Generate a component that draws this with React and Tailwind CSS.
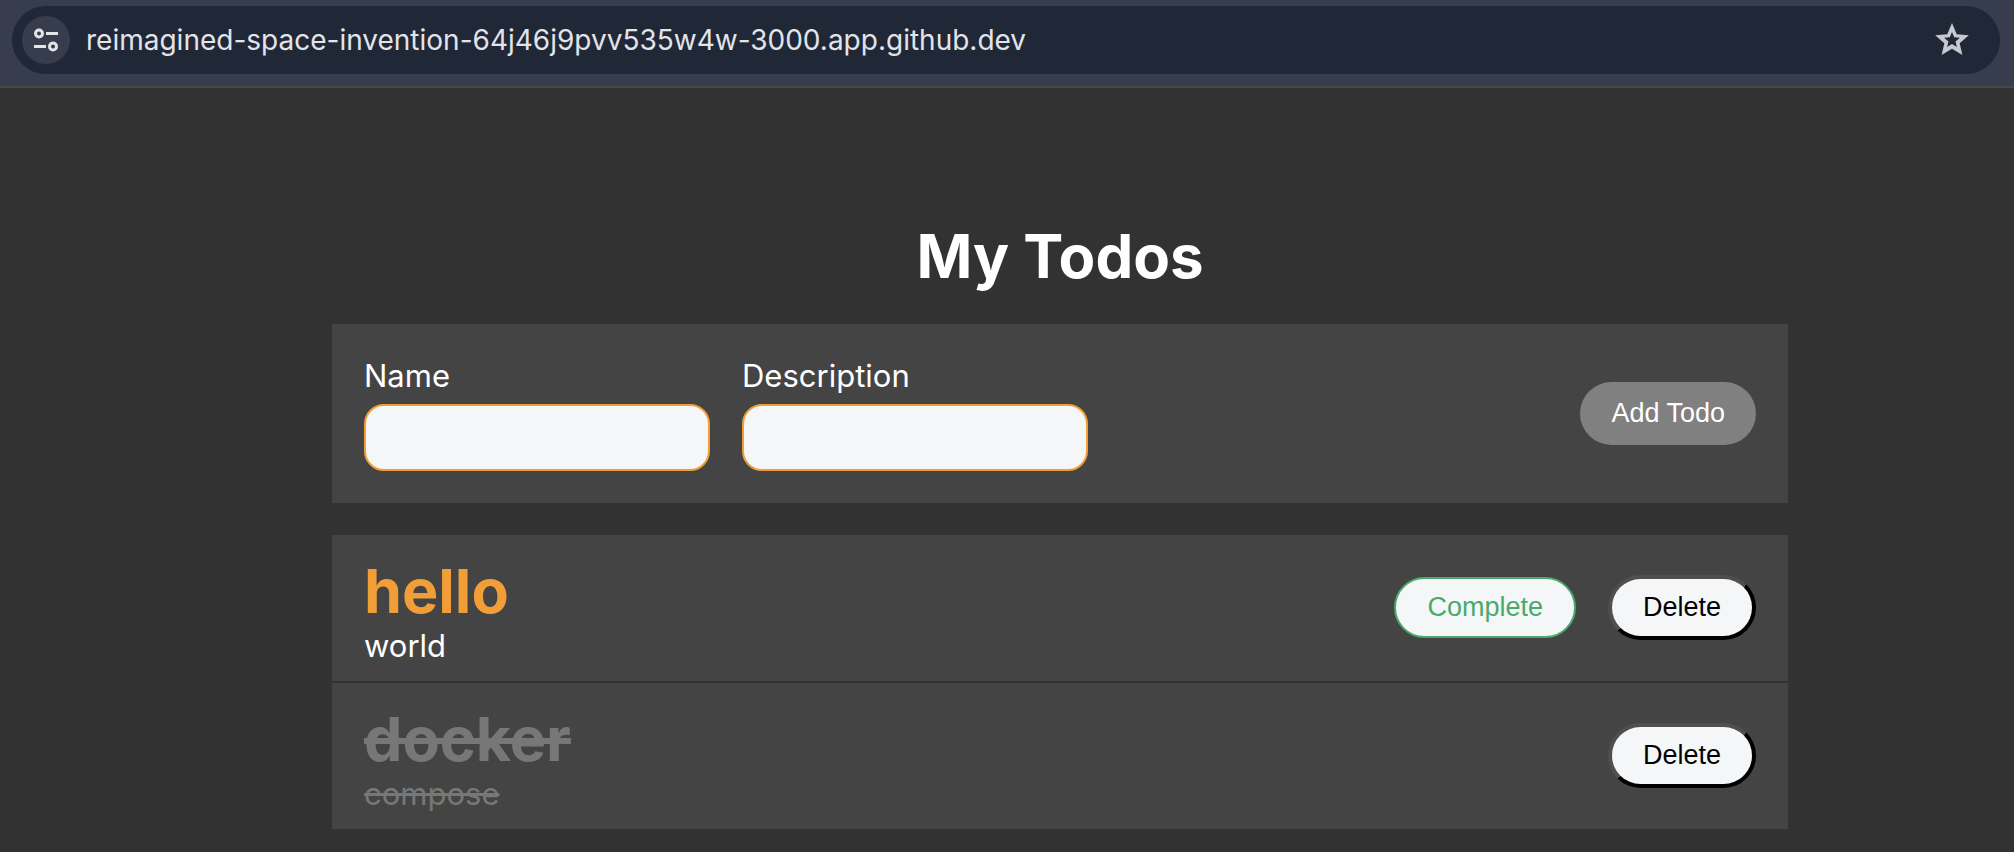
import { useState } from "react";

const initialTodos = [
  { id: 1, name: "hello", description: "world", done: false },
  { id: 2, name: "docker", description: "compose", done: true },
];

function SiteControlsIcon() {
  return (
    <svg viewBox="0 0 24 24" className="size-6" aria-hidden="true">
      <g fill="none" stroke="#e3e3ea" strokeWidth="3">
        <circle cx="5" cy="5.5" r="3.5" />
        <circle cx="19" cy="18.5" r="3.5" />
        <path d="M12 5.5H24M0 18.5H12" />
      </g>
    </svg>
  );
}

function StarIcon() {
  return (
    <svg viewBox="2 2 20 19" className="h-8 w-[34px]" aria-hidden="true">
      <path
        fill="#c7c9d1"
        fillRule="evenodd"
        d="M22 9.24L14.81 8.62 12 2 9.19 8.63 2 9.24 7.46 13.97 5.82 21 12 17.27 18.18 21 16.55 13.97ZM12 7.3L13.3 10.4 16.7 10.75 14.1 13 14.9 16.3 12 14.5 9.1 16.3 9.9 13 7.3 10.75 10.7 10.4Z"
      />
    </svg>
  );
}

function AddressBar() {
  return (
    <header className="border-b-2 border-[#48484b] bg-[#373d4d] pt-[6px] pr-[14px] pb-3 pl-3">
      <div className="flex h-[68px] items-center rounded-full bg-[#202736] pr-[31px] pl-[10px]">
        <button
          type="button"
          aria-label="View site information"
          className="flex size-12 shrink-0 items-center justify-center rounded-full bg-[#373d4d]"
        >
          <SiteControlsIcon />
        </button>
        <input
          type="text"
          aria-label="Address"
          defaultValue="reimagined-space-invention-64j46j9pvv535w4w-3000.app.github.dev"
          className="ml-4 min-w-0 flex-1 bg-transparent text-[28px] text-[#e3e3ea] outline-none"
        />
        <button type="button" aria-label="Bookmark this page" className="shrink-0 pb-[2px]">
          <StarIcon />
        </button>
      </div>
    </header>
  );
}

function Field({ id, label, value, onChange }) {
  return (
    <div className="flex w-[346px] flex-col">
      <label htmlFor={id} className="text-[31px] leading-10">
        {label}
      </label>
      <input
        id={id}
        type="text"
        value={value}
        onChange={(e) => onChange(e.target.value)}
        className="mt-2 h-[67px] rounded-[20px] border-2 border-[#f29e38] bg-[#f5f6f8] px-4 text-[27px] text-black outline-none"
      />
    </div>
  );
}

const pill =
  "rounded-full px-[31px] font-['Liberation_Sans',Arial,sans-serif] text-[27px] leading-[31px]";

function TodoForm({ onAdd }) {
  const [name, setName] = useState("");
  const [description, setDescription] = useState("");

  function submit(e) {
    e.preventDefault();
    if (!name) return;
    onAdd(name, description);
    setName("");
    setDescription("");
  }

  return (
    <form
      onSubmit={submit}
      className="mt-[30px] flex items-center justify-between bg-[#444444] p-8"
    >
      <div className="flex gap-8">
        <Field id="name" label="Name" value={name} onChange={setName} />
        <Field
          id="description"
          label="Description"
          value={description}
          onChange={setDescription}
        />
      </div>
      <button type="submit" className={`${pill} bg-[#808080] py-4 text-white`}>
        Add Todo
      </button>
    </form>
  );
}

function TodoItem({ todo, onComplete, onDelete }) {
  return (
    <li className="flex h-[146px] items-center justify-between bg-[#444444] px-8">
      <div className={`pt-[6px] ${todo.done ? "text-[#777777] line-through" : "text-white"}`}>
        <h2
          className={`text-[61px] leading-[70px] font-bold ${
            todo.done ? "" : "text-[#f29e38]"
          }`}
        >
          {todo.name}
        </h2>
        <p className="text-[31px] leading-[40px]">{todo.description}</p>
      </div>
      <div className="flex items-center gap-8 pb-[2px]">
        {!todo.done && (
          <button
            type="button"
            onClick={onComplete}
            className={`${pill} border-2 border-[#4aa96c] bg-[#f5f6f8] py-[13px] text-[#4aa96c]`}
          >
            Complete
          </button>
        )}
        <button
          type="button"
          onClick={onDelete}
          className={`${pill} border-4 border-t-[#4f4f4f] border-r-black border-b-black border-l-[#4f4f4f] bg-[#f5f6f8] py-[13px] text-black`}
        >
          Delete
        </button>
      </div>
    </li>
  );
}

export default function App() {
  const [todos, setTodos] = useState(initialTodos);

  return (
    <div className="min-h-screen bg-[#323232] font-['Inter',sans-serif] text-white">
      <AddressBar />
      <main className="pt-[130px] pb-[23px] pl-[106px]">
        <div className="mx-auto max-w-[1456px]">
          <h1 className="text-center text-[60px] leading-[76px] font-bold">My Todos</h1>
          <TodoForm
            onAdd={(name, description) =>
              setTodos([...todos, { id: Date.now(), name, description, done: false }])
            }
          />
          <ul className="mt-8 flex flex-col gap-[2px]">
            {todos.map((todo) => (
              <TodoItem
                key={todo.id}
                todo={todo}
                onComplete={() =>
                  setTodos(todos.map((t) => (t.id === todo.id ? { ...t, done: true } : t)))
                }
                onDelete={() => setTodos(todos.filter((t) => t.id !== todo.id))}
              />
            ))}
          </ul>
        </div>
      </main>
    </div>
  );
}
